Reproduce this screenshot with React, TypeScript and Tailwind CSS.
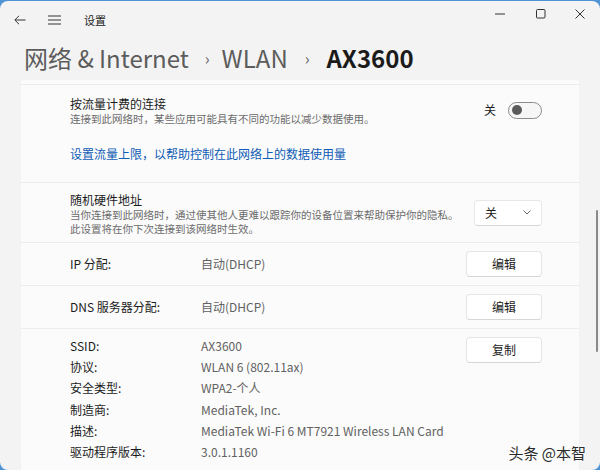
import React from "react";

const font = { fontFamily: '"Noto Sans CJK SC", "Noto Sans", sans-serif' };

function Btn({ label }: { label: string }) {
  return (
    <div className="w-[76px] h-[26px] flex items-center justify-center rounded-[4px] bg-white border border-[#e5e5e5] border-b-[#d6d6d6] text-[12px] text-[#1b1b1b]">
      {label}
    </div>
  );
}

export default function App() {
  const props: [string, string][] = [
    ["SSID:", "AX3600"],
    ["协议:", "WLAN 6 (802.11ax)"],
    ["安全类型:", "WPA2-个人"],
    ["制造商:", "MediaTek, Inc."],
    ["描述:", "MediaTek Wi-Fi 6 MT7921 Wireless LAN Card"],
    ["驱动程序版本:", "3.0.1.1160"],
  ];
  return (
    <div className="w-[600px] h-[470px] bg-[#4f93d6] overflow-hidden" style={font}>
      <div className="relative mt-[1px] h-[469px] rounded-[8px] bg-[#f3f3f3] overflow-hidden flex flex-col">
        {/* title bar */}
        <div className="h-[38px] flex items-center shrink-0">
          <svg width="12" height="10" viewBox="0 0 12 10" className="ml-[14px]" fill="none" stroke="#333" strokeWidth="1">
            <path d="M11.5 5H1M5 0.8L0.8 5L5 9.2" />
          </svg>
          <svg width="13" height="10" viewBox="0 0 13 10" className="ml-[22px]" fill="none" stroke="#333" strokeWidth="1">
            <path d="M0 1H13M0 5H13M0 9H13" />
          </svg>
          <span className="ml-[23px] text-[11px] text-[#1b1b1b]">设置</span>
          <div className="ml-auto flex items-center self-start pt-[8px]">
            <svg width="10" height="10" viewBox="0 0 10 10" className="mr-[31px]" stroke="#333" strokeWidth="1">
              <path d="M0 5H10" />
            </svg>
            <svg width="10" height="10" viewBox="0 0 10 10" className="mr-[29px]" fill="none" stroke="#333" strokeWidth="1">
              <rect x="0.5" y="0.5" width="8.5" height="8.5" rx="1" />
            </svg>
            <svg width="10" height="10" viewBox="0 0 10 10" className="mr-[15px]" stroke="#333" strokeWidth="1">
              <path d="M0.5 0.5L9.5 9.5M9.5 0.5L0.5 9.5" />
            </svg>
          </div>
        </div>
        {/* breadcrumb */}
        <div className="h-[42px] flex items-center pl-[24px] text-[24px] text-[#5c5c5c] shrink-0 -mt-[2px] whitespace-nowrap">
          <span>网络 &amp; Internet</span>
          <span className="ml-[16px] mr-[12px] text-[16px] text-[#666]">›</span>
          <span>WLAN</span>
          <span className="ml-[17px] mr-[17px] text-[16px] text-[#666]">›</span>
          <span className="text-[#1b1b1b] font-semibold">AX3600</span>
        </div>
        {/* content */}
        <div className="flex-1 flex mt-[1px]">
          <div className="w-[558px] ml-[21px] flex flex-col">
            <div className="h-[5px] bg-[#fbfbfb] border-b border-[#ececec]" />
            {/* metered */}
            <div className="h-[98px] bg-[#fbfbfb] border-b border-[#ececec] pl-[49px] pr-[37px] flex flex-col">
              <div className="flex items-start mt-[10px]">
                <div className="flex flex-col">
                  <span className="text-[12px] leading-[17px] text-[#1b1b1b]">按流量计费的连接</span>
                  <span className="text-[10.5px] leading-[14px] text-[#6b6b6b]">连接到此网络时，某些应用可能具有不同的功能以减少数据使用。</span>
                </div>
                <div className="ml-auto flex items-center mt-[6px]">
                  <span className="text-[12px] text-[#1b1b1b] mr-[12px]">关</span>
                  <div className="w-[34px] h-[17px] rounded-full border border-[#8a8a8a] bg-[#f6f6f6] flex items-center pl-[3px]">
                    <div className="w-[10px] h-[10px] rounded-full bg-[#5a5a5a]" />
                  </div>
                </div>
              </div>
              <span className="mt-[19px] text-[12px] text-[#0f5cb5]">设置流量上限，以帮助控制在此网络上的数据使用量</span>
            </div>
            {/* random hw */}
            <div className="h-[60px] bg-[#fbfbfb] border-b border-[#ececec] pl-[49px] pr-[37px] flex items-center">
              <div className="flex flex-col whitespace-nowrap pt-[3px]">
                <span className="text-[12px] leading-[16px] text-[#1b1b1b]">随机硬件地址</span>
                <span className="text-[10.5px] leading-[14px] text-[#6b6b6b]">当你连接到此网络时，通过使其他人更难以跟踪你的设备位置来帮助保护你的隐私。</span>
                <span className="text-[10.5px] leading-[14px] text-[#6b6b6b]">此设置将在你下次连接到该网络时生效。</span>
              </div>
              <div className="ml-auto w-[68px] h-[26px] rounded-[4px] bg-white border border-[#e8e8e8] border-b-[#d6d6d6] flex items-center px-[10px]">
                <span className="text-[12px] text-[#1b1b1b]">关</span>
                <svg width="8" height="5" viewBox="0 0 8 5" className="ml-auto" fill="none" stroke="#666" strokeWidth="1">
                  <path d="M0.5 0.5L4 4L7.5 0.5" />
                </svg>
              </div>
            </div>
            {/* IP */}
            <div className="h-[43px] bg-[#fbfbfb] border-b border-[#ececec] pl-[49px] pr-[37px] flex items-center text-[12px]">
              <span className="w-[131px] text-[#1b1b1b]">IP 分配:</span>
              <span className="text-[#616161]">自动(DHCP)</span>
              <div className="ml-auto"><Btn label="编辑" /></div>
            </div>
            {/* DNS */}
            <div className="h-[43px] bg-[#fbfbfb] border-b border-[#ececec] pl-[49px] pr-[37px] flex items-center text-[12px]">
              <span className="w-[131px] text-[#1b1b1b]">DNS 服务器分配:</span>
              <span className="text-[#616161]">自动(DHCP)</span>
              <div className="ml-auto"><Btn label="编辑" /></div>
            </div>
            {/* properties */}
            <div className="flex-1 bg-[#fbfbfb] pl-[49px] pr-[37px] pt-[6px] flex text-[12px]">
              <div className="flex flex-col whitespace-nowrap">
                {props.map(([k, v]) => (
                  <div key={k} className="flex h-[21.3px] items-center">
                    <span className="w-[131px] text-[#1b1b1b]">{k}</span>
                    <span className="text-[#616161]">{v}</span>
                  </div>
                ))}
              </div>
              <div className="ml-auto mt-[2px]"><Btn label="复制" /></div>
            </div>
          </div>
          <div className="flex-1 flex justify-end pr-[2px]">
            <div className="w-[2px] h-[142px] mt-[130px] rounded-full bg-[#8a8a8a]" />
          </div>
        </div>
        <div
          className="absolute right-[14px] bottom-[6px] text-[15px] text-[#2a2a2a]"
          style={{ textShadow: "0 0 2px #fff, 0 0 2px #fff" }}
        >
          头条 @本智
        </div>
      </div>
    </div>
  );
}
